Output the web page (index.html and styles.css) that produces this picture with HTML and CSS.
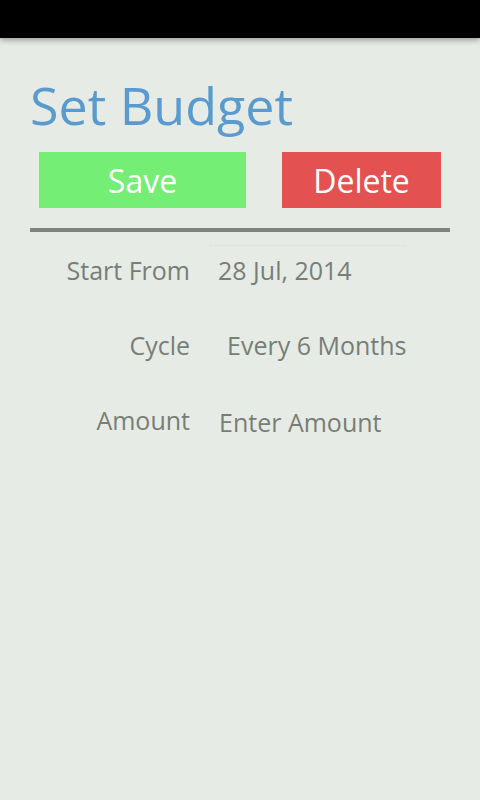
FILE: index.html
```html
<!DOCTYPE html>
<html>
<head>
<meta charset="utf-8">
<link rel="stylesheet" href="styles.css">
</head>
<body>
<div class="status-bar"></div>
<main class="screen">
  <h1 class="title">Set Budget</h1>
  <div class="actions">
    <button class="btn btn-save">Save</button>
    <button class="btn btn-delete">Delete</button>
  </div>
  <hr class="divider">
  <div class="form">
    <div class="row">
      <div class="label">Start From</div>
      <div class="value value-date">28 Jul, 2014</div>
    </div>
    <div class="row">
      <div class="label">Cycle</div>
      <div class="value value-spinner">Every 6 Months</div>
    </div>
    <div class="row">
      <div class="label">Amount</div>
      <div class="value value-input">Enter Amount</div>
    </div>
  </div>
</main>
</body>
</html>
```
FILE: styles.css
```css
html, body {
  margin: 0;
  padding: 0;
  height: 100%;
}
body {
  background: #e6ebe5;
  font-family: "Open Sans", "Noto Sans", "DejaVu Sans", sans-serif;
  color: #787e77;
}
.status-bar {
  height: 38px;
  background: #000;
  box-shadow: 0 2px 6px rgba(0, 0, 0, 0.35);
  position: relative;
}
.screen {
  padding: 0;
}
.title {
  margin: 41px 0 0 30px;
  font-size: 52px;
  line-height: 52px;
  font-weight: normal;
  color: #5a9bcf;
}
.actions {
  display: flex;
  margin-top: 21px;
  padding-left: 39px;
  gap: 36px;
}
.btn {
  border: none;
  height: 56px;
  padding: 0;
  margin: 0;
  font-family: inherit;
  font-size: 32px;
  color: #fff;
  display: flex;
  align-items: center;
  justify-content: center;
}
.btn-save {
  width: 207px;
  background: #74ee74;
}
.btn-delete {
  width: 159px;
  background: #e35151;
}
.divider {
  border: none;
  height: 4px;
  background: #7f847e;
  margin: 20px 30px 0 30px;
}
.form {
  margin-top: 22px;
  display: flex;
  flex-direction: column;
  gap: 43px;
}
.row {
  display: grid;
  grid-template-columns: 190px 1fr;
  column-gap: 28px;
  font-size: 25px;
  line-height: 32px;
}
.label {
  text-align: right;
}
.value-date {
  position: relative;
}
.value-date::before {
  content: "";
  position: absolute;
  left: -8px;
  width: 196px;
  top: -9px;
  border-top: 1px dotted #d9dfd8;
}
.value-spinner {
  padding-left: 9px;
}
.value-input {
  padding-left: 1px;
  padding-top: 2px;
}
```
